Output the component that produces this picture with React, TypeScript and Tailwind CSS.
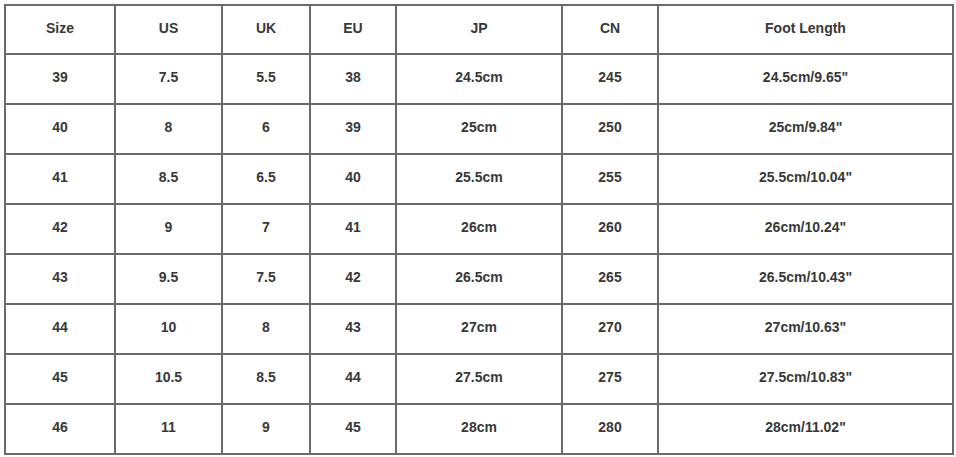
const headers = ['Size', 'US', 'UK', 'EU', 'JP', 'CN', 'Foot Length']
const widths = ['w-[110px]', 'w-[107px]', 'w-[88px]', 'w-[86px]', 'w-[166px]', 'w-[96px]', 'w-[295px]']

const rows = [
    ['39', '7.5', '5.5', '38', '24.5cm', '245', '24.5cm/9.65"'],
    ['40', '8', '6', '39', '25cm', '250', '25cm/9.84"'],
    ['41', '8.5', '6.5', '40', '25.5cm', '255', '25.5cm/10.04"'],
    ['42', '9', '7', '41', '26cm', '260', '26cm/10.24"'],
    ['43', '9.5', '7.5', '42', '26.5cm', '265', '26.5cm/10.43"'],
    ['44', '10', '8', '43', '27cm', '270', '27cm/10.63"'],
    ['45', '10.5', '8.5', '44', '27.5cm', '275', '27.5cm/10.83"'],
    ['46', '11', '9', '45', '28cm', '280', '28cm/11.02"'],
]

export default function App() {
    return (
        <div className="w-[956px] h-[457px] bg-white pl-[4px] pt-[4px] font-['Liberation_Sans',Arial,sans-serif]">
            <table className="table-fixed border-collapse w-[949px] text-[14px] font-bold text-[#383838]">
                <colgroup>
                    {widths.map((w, i) => (
                        <col key={i} className={w} />
                    ))}
                </colgroup>
                <thead>
                    <tr className="h-[49px]">
                        {headers.map((h) => (
                            <th key={h} className="border-2 border-[#6a6a6a] text-center font-bold pb-[3px]">
                                {h}
                            </th>
                        ))}
                    </tr>
                </thead>
                <tbody>
                    {rows.map((row) => (
                        <tr key={row[0]} className="h-[50px]">
                            {row.map((cell, i) => (
                                <td key={i} className="border-2 border-[#6a6a6a] text-center pb-[3px]">
                                    {cell}
                                </td>
                            ))}
                        </tr>
                    ))}
                </tbody>
            </table>
        </div>
    )
}
